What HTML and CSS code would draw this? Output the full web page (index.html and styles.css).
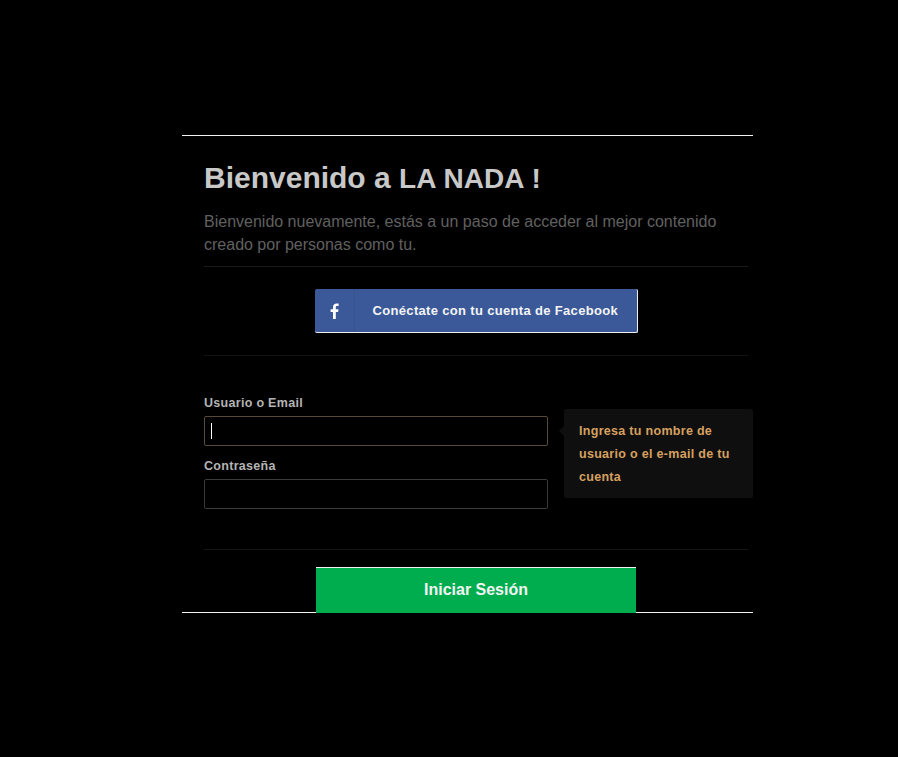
FILE: index.html
```html
<!DOCTYPE html>
<html lang="es">
<head>
  <meta charset="UTF-8" />
  <meta name="viewport" content="width=device-width, initial-scale=1.0"/>
  <title>LA NADA</title>
  <link rel="stylesheet" href="styles.css">
</head>
<body>

  <div class="card">
    <div class="intro">
      <h1>Bienvenido a <span class="brand">LA NADA !</span></h1>
      <p>Bienvenido nuevamente, estás a un paso de acceder al mejor contenido creado por personas como tu.</p>
    </div>

    <div class="social">
      <a class="fb-button" href="#">
        <span class="fb-icon">
          <svg width="10" height="16" viewBox="0 0 10 16"><path fill="#fff" d="M3 16V9H.6V6.2H3V4.1C3 1.600 4.500.4 6.600.4c.9 0 1.700.1 2 .1v2.500H7.200C6 3 5.800 3.600 5.800 4.400v1.800h2.700L8.100 9H5.800v7z"/></svg>
        </span>
        <span class="fb-text">Conéctate con tu cuenta de Facebook</span>
      </a>
    </div>

    <form class="login">
      <label for="user">Usuario o Email</label>
      <div class="field">
        <input type="text" id="user" class="active" />
        <span class="caret"></span>
      </div>
      <label for="pass">Contraseña</label>
      <div class="field">
        <input type="password" id="pass" />
      </div>
      <div class="hint">Ingresa tu nombre de usuario o el e-mail de tu cuenta</div>
    </form>

    <div class="actions">
      <button type="button" class="submit">Iniciar Sesión</button>
    </div>
  </div>

</body>
</html>
```

FILE: styles.css
```css
body {
  font-family: "Liberation Sans", Arial, sans-serif;
  margin: 0;
  padding: 0;
  background: #000;
}

.card {
  width: 571px;
  height: 476px;
  margin: 135px 0 0 182px;
  border-top: 1px solid #f2f2f2;
  border-bottom: 1px solid #f2f2f2;
  display: flex;
  flex-direction: column;
}

.intro {
  margin: 0 5px 0 22px;
  height: 130px;
  border-bottom: 1px solid #1a1a1a;
}

.intro h1 {
  margin: 24px 0 0;
  font-size: 30px;
  line-height: 36px;
  font-weight: bold;
  color: #c8c8c8;
}

.intro .brand {
  font-size: 28px;
  letter-spacing: 0.1px;
}

.intro p {
  margin: 13px 0 0;
  font-size: 16px;
  line-height: 23px;
  color: #606060;
}

.social {
  margin: 0 5px 0 22px;
  height: 88px;
  border-bottom: 1px solid #141414;
  display: flex;
  justify-content: center;
  align-items: flex-start;
}

.fb-button {
  margin-top: 22px;
  width: 322px;
  height: 43px;
  display: flex;
  align-items: center;
  background: #3b5998;
  border-radius: 2px;
  border-right: 1px solid #eee;
  border-bottom: 1px solid #eee;
  text-decoration: none;
  color: #f4f4f4;
}

.fb-icon {
  width: 40px;
  height: 100%;
  box-sizing: border-box;
  padding-left: 1px;
  display: flex;
  align-items: center;
  justify-content: center;
  border-right: 1px solid #37538e;
}

.fb-text {
  margin-left: 18px;
  font-size: 13px;
  font-weight: bold;
  letter-spacing: 0.33px;
}

.login {
  position: relative;
  margin: 0 5px 0 22px;
  height: 194px;
  padding-top: 40px;
  box-sizing: border-box;
  border-bottom: 1px solid #141414;
}

.login label {
  display: block;
  font-size: 12.5px;
  line-height: 14px;
  font-weight: bold;
  letter-spacing: 0.3px;
  color: #b4b4b4;
  margin-bottom: 6px;
}

.field {
  position: relative;
  margin-bottom: 13px;
}

.field input {
  display: block;
  width: 344px;
  height: 30px;
  box-sizing: border-box;
  background: #000;
  border: 1px solid #3a3a3a;
  border-radius: 2px;
  outline: none;
}

.field input.active {
  border-color: #59493a;
}

.caret {
  position: absolute;
  left: 7px;
  top: 7px;
  width: 1px;
  height: 16px;
  background: #fff;
}

.hint {
  position: absolute;
  left: 360px;
  top: 53px;
  width: 189px;
  height: 89px;
  box-sizing: border-box;
  padding: 11px 15px;
  background: #0f0f0f;
  border-radius: 2px;
  font-size: 12.5px;
  line-height: 23px;
  font-weight: bold;
  letter-spacing: 0.3px;
  color: #d6a060;
}

.hint::before {
  content: "";
  position: absolute;
  left: -5px;
  top: 17px;
  border-top: 5px solid transparent;
  border-bottom: 5px solid transparent;
  border-right: 5px solid #0f0f0f;
}

.actions {
  flex: 1;
  display: flex;
  justify-content: center;
  align-items: flex-end;
  padding-left: 17px;
}

.submit {
  width: 320px;
  height: 46px;
  margin-bottom: -1px;
  padding-bottom: 3px;
  border: none;
  border-top: 1px solid #f2f2f2;
  background: #00ad4e;
  color: #f4f4f4;
  font-family: inherit;
  font-size: 16px;
  font-weight: bold;
  cursor: pointer;
}
```
